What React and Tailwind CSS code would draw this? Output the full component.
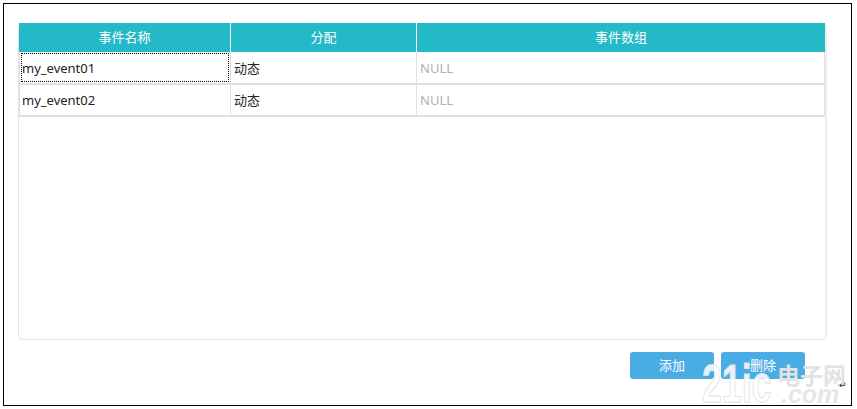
const events = [
  { name: 'my_event01', alloc: '动态', size: 'NULL', focused: true, rowH: 'h-[33px]' },
  { name: 'my_event02', alloc: '动态', size: 'NULL', rowH: 'h-[32px]' },
]

const cjk = "font-['Noto_Sans','Noto_Sans_CJK_SC',sans-serif]"

function App() {
  return (
    <div className="h-[409px] w-[857px] overflow-hidden bg-white pl-[3px] pt-[3px] pr-[5px] pb-[3px]">
      <div className={`relative h-[403px] w-[849px] border border-black bg-white pl-[14px] pt-[19px] ${cjk}`}>
        <div className="h-[317px] w-[809px] rounded-[5px] border border-[#e3e3e3] border-t-0 border-r-2 border-r-[#ececec]">
          <div className="grid w-[806px] grid-cols-[211px_186px_1fr]">
            <div className="flex h-[29px] items-center justify-center bg-[#23b9c9] text-[13px] text-white">事件名称</div>
            <div className="flex h-[29px] items-center justify-center border-l border-white bg-[#23b9c9] text-[13px] text-white">分配</div>
            <div className="flex h-[29px] items-center justify-center border-l border-white bg-[#23b9c9] text-[13px] text-white">事件数组</div>
            {events.map((ev) => (
              <div key={ev.name} className="contents">
                <div className={`${ev.rowH} border-b-2 border-l border-[#e0e0e0] p-[1px]`}>
                  <div className={`flex h-full items-center pl-[0px] pt-[2px] text-[13px] text-[#222] ${ev.focused ? 'border border-dotted border-black' : 'border border-transparent'}`}>{ev.name}</div>
                </div>
                <div className={`${ev.rowH} flex items-center border-b-2 border-l border-[#e0e0e0] pl-[3px] pt-[2px] text-[13px] text-[#222]`}>{ev.alloc}</div>
                <div className={`${ev.rowH} flex items-center border-x border-b-2 border-[#e0e0e0] pl-[3px] pt-[2px] text-[13px] text-[#b3b0b0]`}>{ev.size}</div>
              </div>
            ))}
          </div>
        </div>
        <div className="mt-[12px] flex w-[787px] justify-end gap-[7px]">
          <button className="h-[27px] w-[84px] rounded-[3px] bg-[#4aace4] text-[13px] text-white">添加</button>
          <button className="h-[27px] w-[84px] rounded-[3px] bg-[#4aace4] text-[13px] text-white">删除</button>
        </div>
        {/* watermark over the corner */}
        <div className="pointer-events-none absolute left-[698px] top-[356px] h-[46px] w-[148px]">
          <span className="absolute left-0 top-[-4px] origin-left scale-x-[0.66] font-['Liberation_Sans',sans-serif] text-[54px] leading-[54px] font-bold text-white/85 [-webkit-text-stroke:1px_#e2e2e2]">21ic</span>
          <span className="absolute left-[75px] top-[3px] text-[23px] leading-[25px] font-bold text-[#e2e2e2]">电子网</span>
          <span className="absolute left-[79px] top-[22px] font-['Liberation_Sans',sans-serif] text-[25px] leading-[24px] font-bold italic text-[#e6e6e6]">.com</span>
          <span className="absolute left-[137px] top-[20px] font-['DejaVu_Sans',sans-serif] text-[9px] leading-[10px] text-[#333]">↵</span>
        </div>
      </div>
    </div>
  )
}

export default App
